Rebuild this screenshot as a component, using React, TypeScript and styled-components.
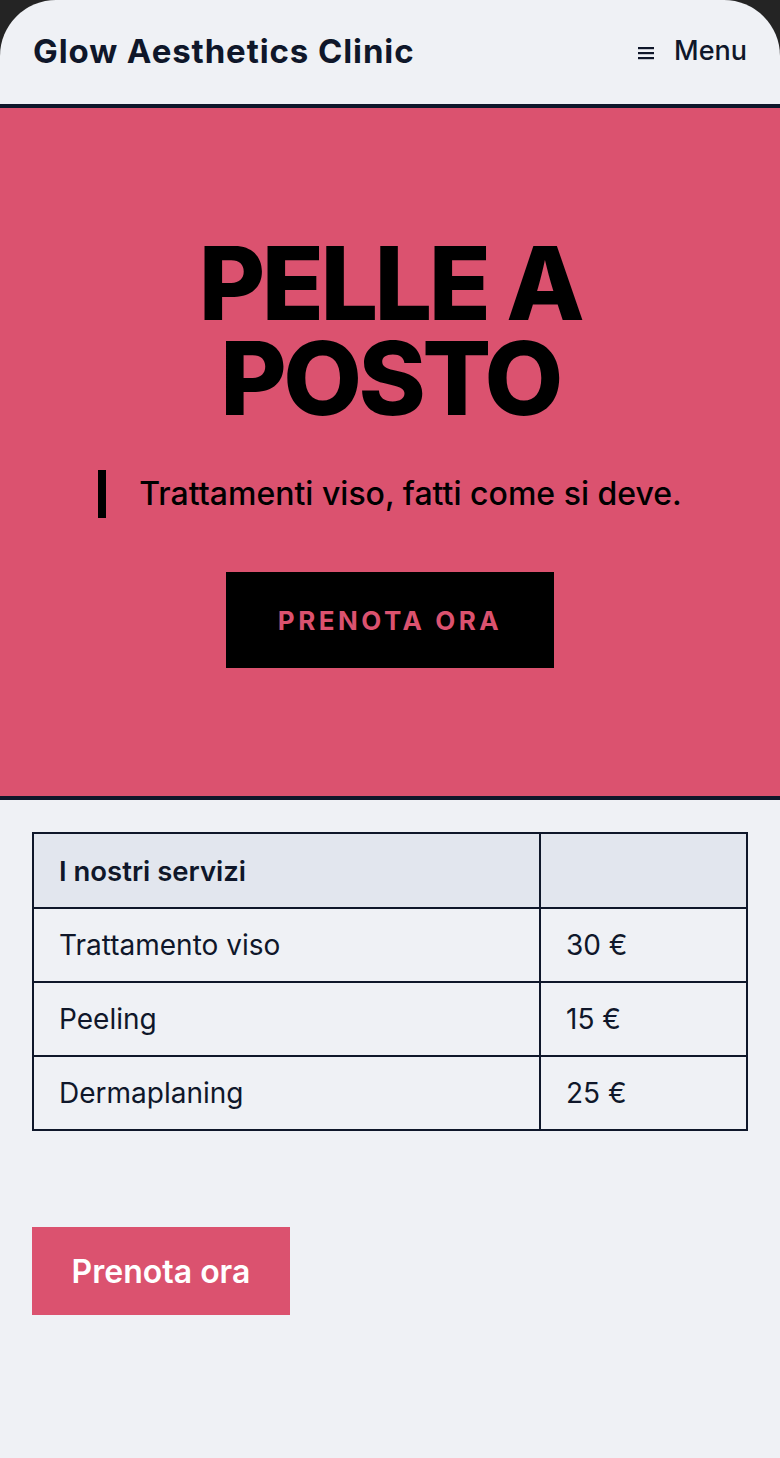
import React from 'react';
import styled, { createGlobalStyle } from 'styled-components';

const GlobalStyle = createGlobalStyle`
	html, body {
		margin: 0;
		padding: 0;
		background: #242424;
	}
	* {
		box-sizing: border-box;
	}
`;

const SERVICES = [
	{ id: 'viso', name: 'Trattamento viso', price: '30 €' },
	{ id: 'peeling', name: 'Peeling', price: '15 €' },
	{ id: 'derma', name: 'Dermaplaning', price: '25 €' },
];

const App = () => {
	return (
		<>
			<GlobalStyle />
			<Page>
				<Header>
					<Brand>Glow Aesthetics Clinic</Brand>
					<MenuButton>
						<MenuIcon viewBox="0 0 16 14">
							<rect x="0" y="1" width="16" height="2.2" />
							<rect x="0" y="6" width="16" height="2.2" />
							<rect x="0" y="11" width="16" height="2.2" />
						</MenuIcon>
						Menu
					</MenuButton>
				</Header>
				<Hero>
					<HeroTitle>
						<TitleLine>PELLE A</TitleLine>
						<TitleLine>POSTO</TitleLine>
					</HeroTitle>
					<Tagline>Trattamenti viso, fatti come si deve.</Tagline>
					<HeroButton>PRENOTA ORA</HeroButton>
				</Hero>
				<Content>
					<ServiceTable>
						<thead>
							<tr>
								<HeadCell $wide>I nostri servizi</HeadCell>
								<HeadCell />
							</tr>
						</thead>
						<tbody>
							{SERVICES.map(({ id, name, price }) => (
								<tr key={id}>
									<Cell $wide>{name}</Cell>
									<Cell>{price}</Cell>
								</tr>
							))}
						</tbody>
					</ServiceTable>
					<BookButton>Prenota ora</BookButton>
				</Content>
			</Page>
		</>
	);
};

const Page = styled.div`
	width: 780px;
	min-height: 1458px;
	background: #eff1f5;
	border-radius: 56px 56px 0 0;
	overflow: hidden;
	font-family: Inter, 'Noto Sans', sans-serif;
	color: #0f172a;
`;

const Header = styled.header`
	height: 108px;
	padding: 0 33px 4px 33px;
	display: flex;
	align-items: center;
	justify-content: space-between;
	border-bottom: 4px solid #0f172a;
`;

const Brand = styled.div`
	font-size: 33px;
	font-weight: 700;
	letter-spacing: 0.9px;
	margin-top: 2px;
`;

const MenuButton = styled.div`
	display: flex;
	align-items: center;
	gap: 20px;
	font-size: 27px;
	font-weight: 500;
`;

const MenuIcon = styled.svg`
	width: 16px;
	height: 14px;
	fill: #0f172a;
	margin-top: 5px;
`;

const Hero = styled.section`
	background: #db526f;
	border-bottom: 4px solid #0f172a;
	height: 692px;
	display: flex;
	flex-direction: column;
	align-items: center;
	padding-top: 128px;
`;

const HeroTitle = styled.h1`
	margin: 0;
	display: flex;
	flex-direction: column;
	align-items: center;
	font-size: 102px;
	font-weight: 800;
	letter-spacing: -3.5px;
	color: #000;
`;

const TitleLine = styled.span`
	display: block;
	height: 95px;
	line-height: 95px;
`;

const Tagline = styled.p`
	margin: 44px 0 0 0;
	padding: 4px 0 4px 33px;
	border-left: 8px solid #000;
	font-size: 32px;
	font-weight: 500;
	line-height: 40px;
	color: #000;
`;

const HeroButton = styled.div`
	margin-top: 54px;
	width: 328px;
	height: 96px;
	background: #000;
	color: #db526f;
	display: flex;
	align-items: center;
	justify-content: center;
	font-size: 26px;
	font-weight: 700;
	letter-spacing: 3.5px;
`;

const Content = styled.main`
	padding: 32px 32px 0 32px;
`;

const ServiceTable = styled.table`
	width: 716px;
	border-collapse: collapse;
	border: 2px solid #0f172a;
`;

const HeadCell = styled.th<{ $wide?: boolean }>`
	width: ${(p) => (p.$wide ? '507px' : 'auto')};
	height: 75px;
	background: #e2e6ee;
	border: 2px solid #0f172a;
	padding: 0 25px;
	text-align: left;
	font-size: 27.5px;
	font-weight: 600;
`;

const Cell = styled.td<{ $wide?: boolean }>`
	width: ${(p) => (p.$wide ? '507px' : 'auto')};
	height: 74px;
	border: 2px solid #0f172a;
	padding: 0 25px;
	font-size: 28px;
	font-weight: 400;
`;

const BookButton = styled.div`
	margin-top: 96px;
	width: 258px;
	height: 88px;
	background: #db526f;
	color: #fff;
	display: flex;
	align-items: center;
	justify-content: center;
	font-size: 32px;
	font-weight: 600;
`;

export default App;
